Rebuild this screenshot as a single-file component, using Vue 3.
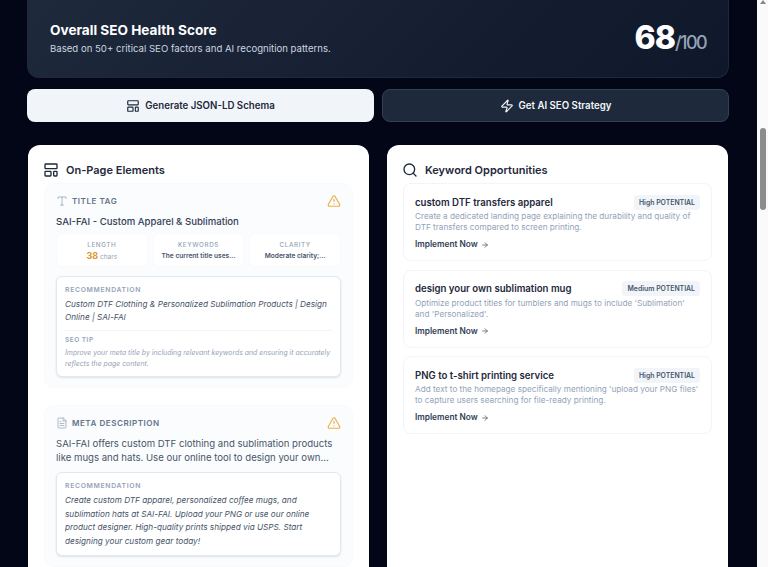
<script setup>
const metrics = [
  { label: 'LENGTH', value: '38', unit: 'chars' },
  { label: 'KEYWORDS', text: 'The current title uses...' },
  { label: 'CLARITY', text: 'Moderate clarity;...' },
]
const keywords = [
  { name: 'custom DTF transfers apparel', level: 'High', text: 'Create a dedicated landing page explaining the durability and quality of DTF transfers compared to screen printing.' },
  { name: 'design your own sublimation mug', level: 'Medium', text: "Optimize product titles for tumblers and mugs to include 'Sublimation' and 'Personalized'." },
  { name: 'PNG to t-shirt printing service', level: 'High', text: "Add text to the homepage specifically mentioning 'upload your PNG files' to capture users searching for file-ready printing." },
]
</script>

<template>
  <div class="window">
    <main class="page">
      <section class="hero">
        <div>
          <h1>Overall SEO Health Score</h1>
          <p>Based on 50+ critical SEO factors and AI recognition patterns.</p>
        </div>
        <div class="score"><b>68</b><span>/100</span></div>
      </section>

      <div class="actions">
        <button class="btn light">
          <svg viewBox="0 0 24 24" class="ic14"><rect x="3" y="3" width="18" height="7" rx="1"/><rect x="3" y="14" width="9" height="7" rx="1"/><rect x="16" y="14" width="5" height="7" rx="1"/></svg>
          Generate JSON-LD Schema
        </button>
        <button class="btn dark">
          <svg viewBox="0 0 24 24" class="ic14"><path d="M4 14a1 1 0 0 1-.78-1.63l9.9-10.2a.5.5 0 0 1 .86.46l-1.92 6.02A1 1 0 0 0 13 10h7a1 1 0 0 1 .78 1.63l-9.9 10.2a.5.5 0 0 1-.86-.46l1.92-6.02A1 1 0 0 0 11 14z"/></svg>
          Get AI SEO Strategy
        </button>
      </div>

      <div class="cols">
        <section class="card">
          <h2>
            <svg viewBox="0 0 24 24" class="ic16"><rect x="3" y="3" width="18" height="7" rx="1"/><rect x="3" y="14" width="9" height="7" rx="1"/><rect x="16" y="14" width="5" height="7" rx="1"/></svg>
            On-Page Elements
          </h2>
          <article class="el">
            <div class="el-head">
              <span class="el-label">
                <svg viewBox="0 0 24 24" class="ic12"><path d="M4 7V4h16v3M9 20h6M12 4v16"/></svg>
                TITLE TAG
              </span>
              <svg viewBox="0 0 24 24" class="warn"><path d="M21.7 18 13.7 4a2 2 0 0 0-3.4 0l-8 14a2 2 0 0 0 1.7 3h16a2 2 0 0 0 1.7-3Z"/><path d="M12 9v4M12 17h.01"/></svg>
            </div>
            <div class="title-val">SAI-FAI - Custom Apparel &amp; Sublimation</div>
            <div class="metrics">
              <div v-for="m in metrics" :key="m.label" class="metric">
                <div class="m-label">{{ m.label }}</div>
                <div v-if="m.value" class="m-val"><b>{{ m.value }}</b> <span>{{ m.unit }}</span></div>
                <div v-else class="m-text">{{ m.text }}</div>
              </div>
            </div>
            <div class="rec">
              <div class="rec-label">RECOMMENDATION</div>
              <p class="rec-text">Custom DTF Clothing &amp; Personalized Sublimation Products | Design Online | SAI-FAI</p>
              <div class="tip">
                <div class="tip-label">SEO TIP</div>
                <p>Improve your meta title by including relevant keywords and ensuring it accurately reflects the page content.</p>
              </div>
            </div>
          </article>
          <article class="el">
            <div class="el-head">
              <span class="el-label">
                <svg viewBox="0 0 24 24" class="ic12"><path d="M14 2H6a2 2 0 0 0-2 2v16a2 2 0 0 0 2 2h12a2 2 0 0 0 2-2V8Z"/><path d="M14 2v6h6M16 13H8M16 17H8M10 9H8"/></svg>
                META DESCRIPTION
              </span>
              <svg viewBox="0 0 24 24" class="warn"><path d="M21.7 18 13.7 4a2 2 0 0 0-3.4 0l-8 14a2 2 0 0 0 1.7 3h16a2 2 0 0 0 1.7-3Z"/><path d="M12 9v4M12 17h.01"/></svg>
            </div>
            <div class="desc-val">SAI-FAI offers custom DTF clothing and sublimation products like mugs and hats. Use our online tool to design your own...</div>
            <div class="rec compact">
              <div class="rec-label">RECOMMENDATION</div>
              <p class="rec-body">Create custom DTF apparel, personalized coffee mugs, and sublimation hats at SAI-FAI. Upload your PNG or use our online product designer. High-quality prints shipped via USPS. Start designing your custom gear today!</p>
            </div>
          </article>
        </section>

        <section class="card">
          <h2>
            <svg viewBox="0 0 24 24" class="ic16"><circle cx="11" cy="11" r="8"/><path d="m21 21-4.3-4.3"/></svg>
            Keyword Opportunities
          </h2>
          <article v-for="k in keywords" :key="k.name" class="kw">
            <div class="kw-head">
              <span class="kw-name">{{ k.name }}</span>
              <span class="badge">{{ k.level }} POTENTIAL</span>
            </div>
            <p>{{ k.text }}</p>
            <a class="impl">Implement Now
              <svg viewBox="0 0 24 24" class="arrow"><path d="M5 12h14M12 5l7 7-7 7"/></svg>
            </a>
          </article>
        </section>
      </div>
    </main>
    <div class="scrollbar">
      <span class="up"></span>
      <span class="thumb"></span>
    </div>
  </div>
</template>

<style scoped>
.window {
  display: flex;
  height: 567px;
  overflow: hidden;
  background: #020617;
  font-family: Inter, "Liberation Sans", sans-serif;
}
.page {
  flex: 1;
  min-width: 0;
  padding: 0 28px 0 27px;
  height: 567px;
  overflow: hidden;
}
svg {
  fill: none;
  stroke: currentColor;
  stroke-width: 2;
  stroke-linecap: round;
  stroke-linejoin: round;
  flex: none;
}
.ic12 { width: 12px; height: 12px; }
.ic14 { width: 14px; height: 14px; }
.ic16 { width: 16px; height: 16px; }

.hero {
  height: 78px;
  box-sizing: border-box;
  padding: 0 22px 1px 22px;
  display: flex;
  justify-content: space-between;
  align-items: center;
  border: 1px solid #1e293b;
  border-top: 0;
  border-radius: 0 0 12px 12px;
  background: linear-gradient(135deg, #1e293b, #0f172a);
}
.hero h1 {
  margin: 0 0 2px;
  font-size: 13.6px;
  line-height: 20px;
  font-weight: 700;
  color: #fff;
}
.hero p {
  margin: 0;
  font-size: 9.6px;
  line-height: 14px;
  color: #cbd5e1;
}
.score { color: #94a3b8; white-space: nowrap; }
.score b { font-size: 32px; line-height: 40px; font-weight: 800; color: #fff; letter-spacing: -1px; }
.score span { font-size: 18px; font-weight: 500; letter-spacing: -1.6px; }

.actions {
  display: grid;
  grid-template-columns: 1fr 1fr;
  gap: 8px;
  margin-top: 11px;
}
.btn {
  height: 33px;
  border-radius: 8px;
  display: flex;
  align-items: center;
  justify-content: center;
  gap: 5px;
  font: 600 9.7px Inter, "Liberation Sans", sans-serif;
  padding: 0;
}
.btn.light { background: #f1f5f9; color: #1e293b; border: 0; }
.btn.dark { background: #1e293b; color: #f1f5f9; border: 1px solid #334155; }

.cols {
  display: grid;
  grid-template-columns: 341px 341px;
  gap: 18px;
  margin-top: 23px;
  margin-left: 1px;
}
.card {
  background: #fff;
  border-radius: 12px;
  padding: 16px;
  height: 560px;
  box-sizing: border-box;
}
.card h2 {
  margin: 0 0 4px;
  display: flex;
  align-items: center;
  gap: 7px;
  font-size: 11px;
  line-height: 18px;
  font-weight: 600;
  color: #1e293b;
}
.card h2 svg { margin-left: -1px; }
.el {
  border: 1px solid #f8fafc;
  background: #fbfcfe;
  border-radius: 10px;
  padding: 9px 11px 10px;
  margin-bottom: 17px;
}
.el-head {
  display: flex;
  justify-content: space-between;
  align-items: center;
  height: 16px;
}
.el-label {
  display: flex;
  align-items: center;
  gap: 4px;
  font-size: 8.1px;
  font-weight: 600;
  letter-spacing: .5px;
  color: #64748b;
}
.el-label svg { stroke-width: 1.5; color: #94a3b8; }
.warn { width: 14px; height: 14px; color: #eab04a; }
.title-val {
  margin-top: 5px;
  font-size: 9.6px;
  line-height: 15px;
  font-weight: 500;
  color: #334155;
}
.metrics {
  display: grid;
  grid-template-columns: repeat(3, 1fr);
  gap: 5px;
  margin-top: 4px;
}
.metric {
  height: 34px;
  box-sizing: border-box;
  padding-top: 6px;
  text-align: center;
  background: #fff;
  border: 1px solid #f8fafc;
  border-radius: 6px;
}
.m-label { font-size: 6.3px; line-height: 10px; font-weight: 500; letter-spacing: .6px; color: #94a3b8; }
.m-val { font-size: 6.5px; line-height: 12px; color: #94a3b8; }
.m-val b { font-size: 9px; font-weight: 700; color: #e0952c; }
.m-text { font-size: 6.6px; line-height: 12px; font-weight: 600; color: #475569; }
.rec {
  margin-top: 9px;
  padding: 8px 8px 7px;
  background: #fff;
  border: 1px solid #e2e8f0;
  border-radius: 6px;
  box-shadow: 0 1px 2px rgba(15, 23, 42, .12);
}
.rec.compact { margin-top: 8px; }
.rec-label { font-size: 6.8px; line-height: 10px; font-weight: 600; letter-spacing: .7px; color: #94a3b8; }
.rec-text { margin: 3px 0 0; font-size: 8.2px; line-height: 13px; font-style: italic; color: #475569; }
.rec-body { margin: 3px 0 0; font-size: 8.2px; line-height: 13.6px; font-style: italic; color: #475569; }
.tip { margin-top: 6px; padding-top: 4px; border-top: 1px solid #f1f5f9; }
.tip-label { font-size: 6.5px; line-height: 10px; font-weight: 600; letter-spacing: .5px; color: #94a3b8; }
.tip p { margin: 3px 0 0; font-size: 6.9px; line-height: 10.5px; font-style: italic; color: #94a3b8; }
.desc-val { margin-top: 6px; font-size: 9.6px; line-height: 13.5px; color: #475569; }

.kw {
  border: 1px solid #f1f5f9;
  border-radius: 8px;
  padding: 11px 11px 10px;
  height: 78px;
  box-sizing: border-box;
  margin-bottom: 8.5px;
}
.kw-head { display: flex; justify-content: space-between; align-items: center; height: 14px; }
.kw-name { font-size: 9.65px; font-weight: 600; color: #1e293b; }
.badge {
  font-size: 6.9px;
  font-weight: 600;
  color: #475569;
  background: #f1f5f9;
  padding: 3px 5px;
  border-radius: 3px;
}
.kw p { margin: 2px 0 0; font-size: 8.2px; line-height: 11px; color: #94a3b8; }
.impl {
  display: flex;
  align-items: center;
  gap: 3px;
  margin-top: 6px;
  font-size: 8.3px;
  line-height: 11px;
  font-weight: 600;
  color: #334155;
}
.arrow { width: 8px; height: 8px; }

.scrollbar {
  width: 11px;
  flex: none;
  background: #fafafa;
  position: relative;
}
.up {
  position: absolute;
  top: 0;
  left: 3px;
  width: 0;
  height: 0;
  border: 3px solid transparent;
  border-top: 0;
  border-bottom: 4px solid #888;
}
.thumb {
  position: absolute;
  top: 128px;
  left: 3px;
  width: 6px;
  height: 82px;
  border-radius: 3px;
  background: #8c8c8c;
}
</style>
